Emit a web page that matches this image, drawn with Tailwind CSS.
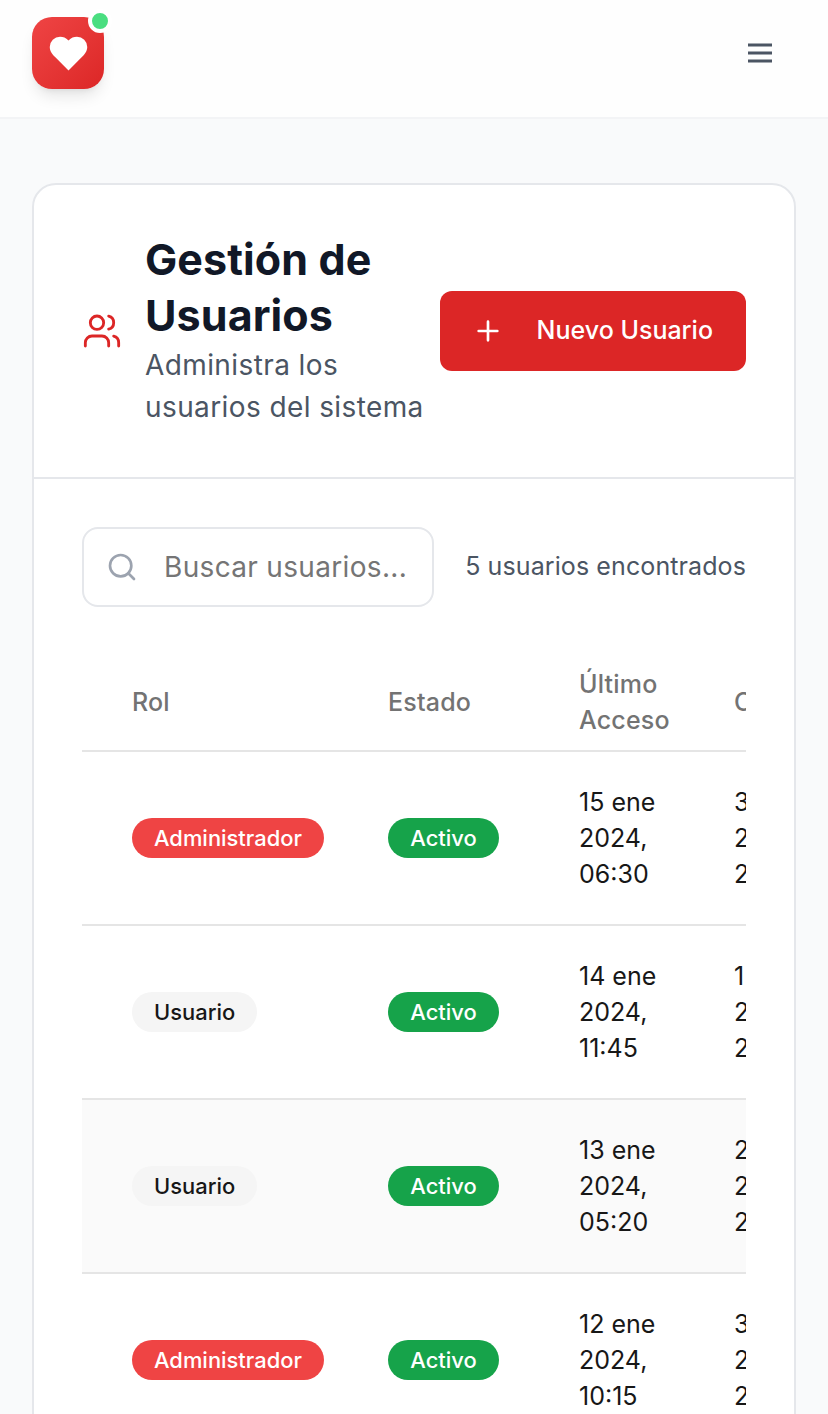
<!DOCTYPE html>
<html lang="es">
<head>
<meta charset="utf-8">
<script src="https://cdn.jsdelivr.net/npm/@tailwindcss/browser@4"></script>
<title>Gestión de Usuarios</title>
</head>
<body class="bg-[#f9fafb] font-[Inter,sans-serif] text-[#171717]">
<div class="h-[1414px] overflow-hidden">
  <header class="flex h-[119px] items-start justify-between border-b-2 border-[#f3f4f6] bg-[#fefefe] pl-8 pr-[56px] pt-[17px]">
    <div class="relative flex h-[72px] w-[72px] items-center justify-center rounded-[20px] bg-gradient-to-br from-[#ef4444] to-[#dc2626] shadow-[0_10px_15px_-3px_rgba(0,0,0,0.1),0_4px_6px_-4px_rgba(0,0,0,0.1)]">
      <svg width="45" height="45" viewBox="0 0 24 24" fill="#fff"><path d="M19 14c1.49-1.46 3-3.21 3-5.5A5.5 5.5 0 0 0 16.5 3c-1.76 0-3 .5-4.5 2-1.5-1.5-2.74-2-4.5-2A5.5 5.5 0 0 0 2 8.5c0 2.3 1.5 4.05 3 5.5l7 7Z"/></svg>
      <span class="absolute -right-2 -top-2 h-6 w-6 rounded-full border-4 border-white bg-[#4ade80]"></span>
    </div>
    <svg class="mt-6" width="24" height="24" viewBox="0 0 24 24" fill="none" stroke="#4b5563" stroke-width="2.8"><path d="M0 4h24M0 12h24M0 20h24"/></svg>
  </header>
  <main class="px-8 pt-16">
    <section class="rounded-3xl border-2 border-[#e5e7eb] bg-white">
      <div class="flex items-center justify-between border-b-2 border-[#e5e7eb] p-12">
        <div class="flex items-center gap-[23px]">
          <svg class="shrink-0" width="40" height="40" viewBox="0 0 24 24" fill="none" stroke="#dc2626" stroke-width="1.7" stroke-linecap="round" stroke-linejoin="round"><path d="M16 21v-2a4 4 0 0 0-4-4H6a4 4 0 0 0-4 4v2"/><circle cx="9" cy="7" r="4"/><path d="M22 21v-2a4 4 0 0 0-3-3.87"/><path d="M16 3.13a4 4 0 0 1 0 7.75"/></svg>
          <div class="w-[284px] shrink-0">
            <h1 class="-mt-[2px] mb-[2px] text-[43px] font-bold leading-[56px] tracking-[0.1px] text-[#111827]">Gestión de Usuarios</h1>
            <p class="-mt-px mb-px text-[28px] leading-[42px] tracking-[0.4px] text-[#4b5563]">Administra los usuarios del sistema</p>
          </div>
        </div>
        <button class="flex h-20 shrink-0 items-center gap-[33px] rounded-xl bg-[#dc2626] pl-8 pr-[33px] text-[25px] font-medium text-white">
          <svg width="32" height="32" viewBox="0 0 24 24" fill="none" stroke="#fff" stroke-width="2" stroke-linecap="round"><path d="M5 12h14M12 5v14"/></svg>
          <span>Nuevo Usuario</span>
        </button>
      </div>
      <div class="p-12">
        <div class="flex items-center justify-between">
          <div class="flex h-20 w-[352px] shrink-0 items-center gap-[26px] rounded-2xl border-2 border-[#e5e7eb] pl-[22px]">
            <svg class="shrink-0" width="32" height="32" viewBox="0 0 24 24" fill="none" stroke="#9ca3af" stroke-width="2" stroke-linecap="round"><circle cx="11" cy="11" r="8"/><path d="m21 21-4.3-4.3"/></svg>
            <span class="whitespace-nowrap text-[28px] tracking-[0.33px] text-[#757575]">Buscar usuarios...</span>
          </div>
          <p class="whitespace-nowrap text-[25px] tracking-[0.1px] text-[#4b5563]">5 usuarios encontrados</p>
        </div>
        <div class="mt-12 overflow-hidden">
          <table class="w-[812px] table-fixed border-collapse text-left text-[25px] leading-9">
            <thead>
              <tr class="border-b-2 border-[#e5e5e5] text-[#737373]">
                <th class="h-[96px] w-[306px] pb-px pl-[50px] font-[450] tracking-[0.2px]">Rol</th>
                <th class="w-[191px] pb-px font-[450] tracking-[0.2px]">Estado</th>
                <th class="w-[155px] pb-px pr-8 font-[450] tracking-[0.2px]">Último Acceso</th>
                <th class="w-[160px] pb-px font-[450] tracking-[0.2px]">Creado</th>
              </tr>
            </thead>
            <tbody>
              <tr class="border-b-2 border-[#e5e5e5]">
                <td class="py-8 pl-[50px]"><span class="inline-flex h-10 items-center rounded-full bg-[#ef4444] px-[22px] text-[21.92px] font-medium text-white">Administrador</span></td>
                <td class="py-8"><span class="inline-flex h-10 w-[111px] items-center justify-center rounded-full bg-[#16a34a] text-[21.92px] font-medium text-white">Activo</span></td>
                <td class="py-8 pr-8">15 ene 2024, 06:30</td>
                <td class="py-8 pr-8">3 ene 2023, 21:00</td>
              </tr>
              <tr class="border-b-2 border-[#e5e5e5]">
                <td class="py-8 pl-[50px]"><span class="inline-flex h-10 items-center rounded-full bg-[#f5f5f5] px-[22px] text-[21.92px] font-medium text-[#171717]">Usuario</span></td>
                <td class="py-8"><span class="inline-flex h-10 w-[111px] items-center justify-center rounded-full bg-[#16a34a] text-[21.92px] font-medium text-white">Activo</span></td>
                <td class="py-8 pr-8">14 ene 2024, 11:45</td>
                <td class="py-8 pr-8">1 feb 2023, 22:30</td>
              </tr>
              <tr class="border-b-2 border-[#e5e5e5] bg-[#fafafa]">
                <td class="py-8 pl-[50px]"><span class="inline-flex h-10 items-center rounded-full bg-[#f5f5f5] px-[22px] text-[21.92px] font-medium text-[#171717]">Usuario</span></td>
                <td class="py-8"><span class="inline-flex h-10 w-[111px] items-center justify-center rounded-full bg-[#16a34a] text-[21.92px] font-medium text-white">Activo</span></td>
                <td class="py-8 pr-8">13 ene 2024, 05:20</td>
                <td class="py-8 pr-8">2 mar 2023, 20:15</td>
              </tr>
              <tr class="border-b-2 border-[#e5e5e5]">
                <td class="py-8 pl-[50px]"><span class="inline-flex h-10 items-center rounded-full bg-[#ef4444] px-[22px] text-[21.92px] font-medium text-white">Administrador</span></td>
                <td class="py-8"><span class="inline-flex h-10 w-[111px] items-center justify-center rounded-full bg-[#16a34a] text-[21.92px] font-medium text-white">Activo</span></td>
                <td class="py-8 pr-8">12 ene 2024, 10:15</td>
                <td class="py-8 pr-8">3 abr 2023, 23:45</td>
              </tr>
            </tbody>
          </table>
        </div>
      </div>
    </section>
  </main>
</div>
</body>
</html>
